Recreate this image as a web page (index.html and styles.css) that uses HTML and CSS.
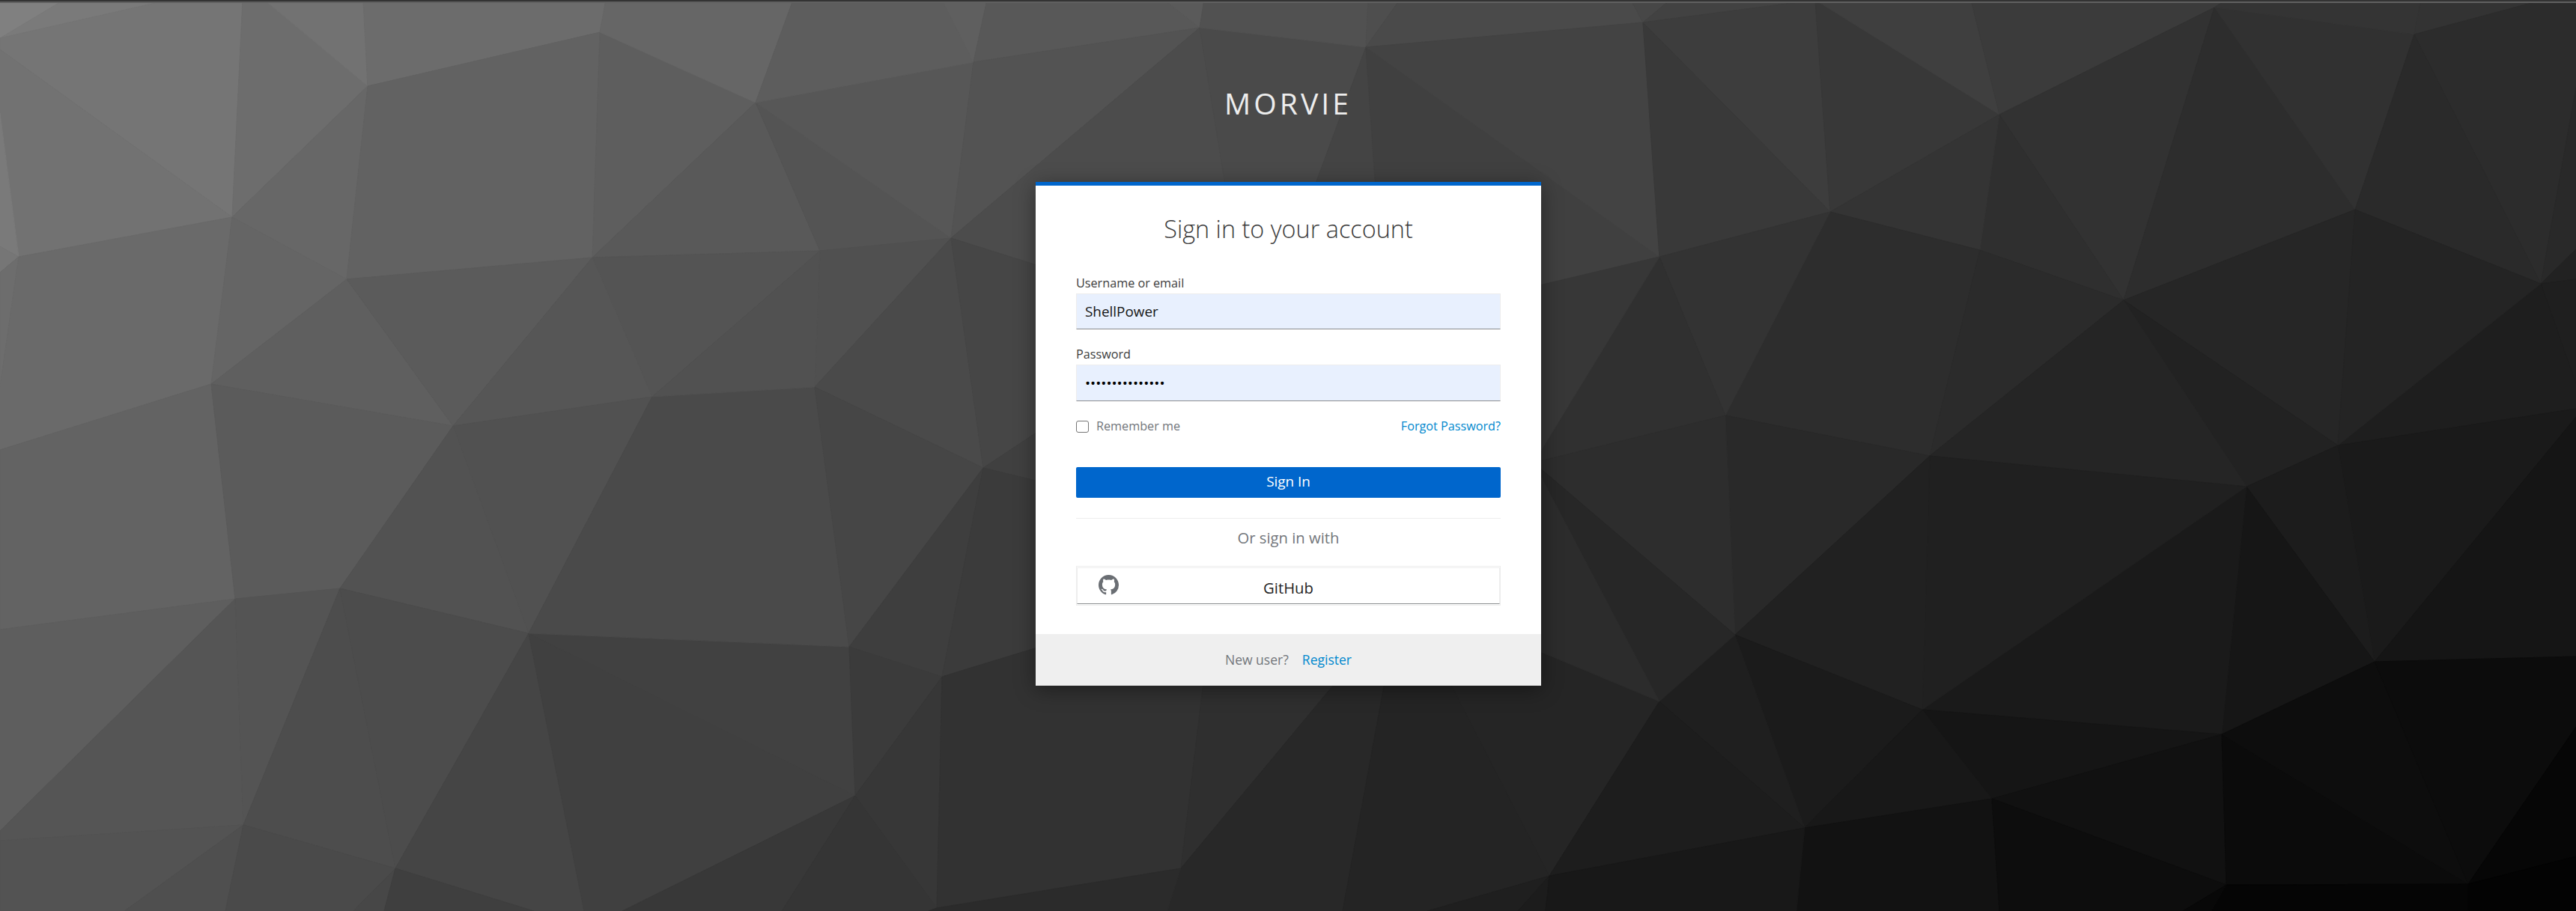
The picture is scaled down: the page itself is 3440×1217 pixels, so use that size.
FILE: index.html
```
<!DOCTYPE html>
<html lang="en">
<head>
<meta charset="utf-8">
<title>Sign in to Morvie</title>
<link rel="stylesheet" href="styles.css">
</head>
<body>
<svg class="backdrop" viewBox="0 0 3440 1217" preserveAspectRatio="none" aria-hidden="true">
  <!-- upper left -->
  <polygon color="#808080" points="0,51 0,0 85,0"/>
  <polygon color="#7a7a7a" points="0,51 85,0 225,0"/>
  <polygon color="#757575" points="0,51 225,0 324,0 310,290 0,66"/>
  <polygon color="#727272" points="0,66 310,290 25,343 0,151"/>
  <polygon color="#7a7a7a" points="0,151 25,343 0,329"/>
  <polygon color="#767676" points="0,329 25,343 0,364"/>
  <polygon color="#6d6d6d" points="0,364 25,343 0,517"/>
  <polygon color="#6d6d6d" points="324,0 353,0 491,115 310,290"/>
  <polygon color="#727272" points="353,0 485,0 491,115"/>
  <polygon color="#6c6c6c" points="485,0 809,0 801,43 491,115"/>
  <polygon color="#676767" points="491,115 463,373 310,290"/>
  <polygon color="#626262" points="491,115 801,43 791,344 463,373"/>
  <polygon color="#6a6a6a" points="25,343 310,290 282,513 0,601 0,517"/>
  <polygon color="#656565" points="310,290 463,373 282,513"/>
  <polygon color="#5f5f5f" points="463,373 605,569 282,513"/>
  <polygon color="#5b5b5b" points="463,373 791,344 605,569"/>
  <polygon color="#5e5e5e" points="801,43 1009,137 791,344"/>
  <polygon color="#666666" points="801,43 809,0 1059,0 1009,137"/>
  <polygon color="#595959" points="791,344 1009,137 1095,335"/>
  <polygon color="#545454" points="791,344 1095,335 871,530"/>
  <polygon color="#565656" points="791,344 871,530 605,569"/>
  <!-- lower left -->
  <polygon color="#636363" points="282,513 314,800 0,841 0,601"/>
  <polygon color="#5b5b5b" points="282,513 605,569 454,786 314,800"/>
  <polygon color="#515151" points="605,569 871,530 706,846"/>
  <polygon color="#525252" points="605,569 706,846 454,786"/>
  <polygon color="#5e5e5e" points="314,800 0,841 0,1110"/>
  <polygon color="#555555" points="314,800 325,1102 0,1123 0,1110"/>
  <polygon color="#545454" points="314,800 454,786 325,1102"/>
  <polygon color="#4d4d4d" points="454,786 528,1160 325,1102"/>
  <polygon color="#4c4c4c" points="454,786 706,846 528,1160"/>
  <polygon color="#454545" points="706,846 528,1160 713,1217 780,1217"/>
  <polygon color="#404040" points="706,846 780,1217 831,1217 1142,1063"/>
  <polygon color="#414141" points="706,846 1142,1063 1134,864"/>
  <polygon color="#4a4a4a" points="871,530 1088,517 1134,864 706,846"/>
  <polygon color="#535353" points="325,1102 0,1123 0,1217 166,1217"/>
  <polygon color="#4f4f4f" points="325,1102 166,1217 301,1217"/>
  <polygon color="#4a4a4a" points="325,1102 301,1217 472,1217 528,1160"/>
  <polygon color="#474747" points="528,1160 472,1217 513,1217"/>
  <polygon color="#3f3f3f" points="528,1160 513,1217 713,1217"/>
  <!-- upper centre -->
  <polygon color="#545454" points="1009,137 1095,335 1270,318"/>
  <polygon color="#575757" points="1009,137 1300,83 1270,318"/>
  <polygon color="#5d5d5d" points="1009,137 1059,0 1258,0 1300,83"/>
  <polygon color="#5f5f5f" points="1300,83 1258,0 1318,0"/>
  <polygon color="#585858" points="1300,83 1318,0 1555,0 1602,37"/>
  <polygon color="#5a5a5a" points="1602,37 1555,0 1608,0"/>
  <polygon color="#535353" points="1300,83 1602,37 1270,318"/>
  <polygon color="#505050" points="1095,335 1270,318 1088,517"/>
  <polygon color="#515151" points="1095,335 1088,517 871,530"/>
  <polygon color="#4a4a4a" points="1270,318 1088,517 1313,625"/>
  <polygon color="#464646" points="1088,517 1134,864 1313,625"/>
  <polygon color="#4c4c4c" points="1602,37 1270,318 1381,353 1500,400 1661,400"/>
  <polygon color="#464646" points="1270,318 1381,353 1500,400 1500,501 1313,625"/>
  <polygon color="#4a4a4a" points="1602,37 1824,63 1700,400 1661,400"/>
  <polygon color="#515151" points="1602,37 1608,0 1827,0 1824,63"/>
  <polygon color="#4e4e4e" points="1824,63 1827,0 1869,0"/>
  <polygon color="#4a4a4a" points="1824,63 1869,0 2178,0 2194,30"/>
  <polygon color="#444444" points="1824,63 1700,400 1847,400"/>
  <polygon color="#404040" points="1824,63 1847,400 2058,380 2216,343"/>
  <polygon color="#434343" points="1824,63 2194,30 2216,343"/>
  <!-- lower centre -->
  <polygon color="#404040" points="1313,625 1500,501 1500,670"/>
  <polygon color="#3e3e3e" points="1134,864 1313,625 1258,904"/>
  <polygon color="#3b3b3b" points="1313,625 1500,670 1500,830 1258,904"/>
  <polygon color="#3b3b3b" points="1134,864 1258,904 1142,1063"/>
  <polygon color="#373737" points="1258,904 1251,1213 1142,1063"/>
  <polygon color="#383838" points="1142,1063 831,1217 1044,1217"/>
  <polygon color="#353535" points="1142,1063 1044,1217 1240,1217 1251,1213"/>
  <polygon color="#323232" points="1258,904 1500,830 1617,830 1577,1160 1251,1213"/>
  <polygon color="#2f2f2f" points="1617,830 1577,1160 1780,916 1850,830"/>
  <polygon color="#282828" points="1577,1160 1780,916 1850,830 1864,830 1793,1217 1559,1217"/>
  <polygon color="#2b2b2b" points="1251,1213 1577,1160 1559,1217 1240,1217"/>
  <polygon color="#242424" points="1864,830 1910,860 2069,1170 1906,1217 1793,1217"/>
  <polygon color="#252525" points="1910,860 1950,826 2216,937 2069,1170"/>
  <polygon color="#1f1f1f" points="2069,1170 1906,1217 2027,1217"/>
  <polygon color="#1c1c1c" points="2069,1170 2027,1217 2064,1217"/>
  <!-- upper right -->
  <polygon color="#474747" points="2194,30 2178,0 2230,0"/>
  <polygon color="#424242" points="2194,30 2230,0 2424,0"/>
  <polygon color="#3d3d3d" points="2194,30 2424,0 2444,283"/>
  <polygon color="#393939" points="2194,30 2444,283 2216,343"/>
  <polygon color="#383838" points="2424,0 2444,283 2670,153"/>
  <polygon color="#3f3f3f" points="2424,0 2632,0 2670,153"/>
  <polygon color="#3b3b3b" points="2670,153 2632,0 2972,0 2957,10"/>
  <polygon color="#323232" points="2670,153 2957,10 2836,401"/>
  <polygon color="#2f2f2f" points="2670,153 2836,401 2644,334"/>
  <polygon color="#343434" points="2670,153 2644,334 2444,283"/>
  <polygon color="#2d2d2d" points="2444,283 2644,334 2577,609 2304,555"/>
  <polygon color="#333333" points="2216,343 2444,283 2304,555"/>
  <polygon color="#303030" points="2216,343 2304,555 2048,618"/>
  <polygon color="#373737" points="2216,343 2048,618 2040,385"/>
  <polygon color="#2b2b2b" points="2644,334 2836,401 2577,609"/>
  <polygon color="#2d2d2d" points="2957,10 3145,280 2836,401"/>
  <polygon color="#313131" points="2957,10 3224,46 3145,280"/>
  <polygon color="#343434" points="2957,10 2972,0 3233,0 3224,46"/>
  <polygon color="#333333" points="3224,46 3233,0 3395,0"/>
  <polygon color="#2c2c2c" points="3224,46 3395,0 3440,0 3440,117 3393,379"/>
  <polygon color="#2a2a2a" points="3224,46 3393,379 3145,280"/>
  <polygon color="#292929" points="3393,379 3440,117 3440,333"/>
  <polygon color="#222222" points="3393,379 3440,333 3440,373"/>
  <polygon color="#1f1f1f" points="3393,379 3440,373 3440,513"/>
  <polygon color="#1e1e1e" points="3393,379 3440,513 3440,546 3122,595"/>
  <polygon color="#262626" points="2836,401 3145,280 3122,595"/>
  <polygon color="#242424" points="3145,280 3393,379 3122,595"/>
  <polygon color="#222222" points="2836,401 3122,595 3000,650"/>
  <polygon color="#252525" points="2836,401 3000,650 2577,609"/>
  <!-- lower right -->
  <polygon color="#1a1a1a" points="3122,595 3440,546 3440,557 3171,884"/>
  <polygon color="#151515" points="3171,884 3440,557 3440,877"/>
  <polygon color="#1c1c1c" points="3000,650 3122,595 3171,884"/>
  <polygon color="#161616" points="3000,650 3171,884 2967,981"/>
  <polygon color="#1a1a1a" points="3000,650 2967,981 2567,948"/>
  <polygon color="#202020" points="2577,609 3000,650 2567,948"/>
  <polygon color="#292929" points="2304,555 2577,609 2317,848"/>
  <polygon color="#2d2d2d" points="2304,555 2317,848 2048,618"/>
  <polygon color="#212121" points="2577,609 2567,948 2317,848"/>
  <polygon color="#1b1b1b" points="2317,848 2567,948 2410,1106"/>
  <polygon color="#1f1f1f" points="2317,848 2410,1106 2216,937"/>
  <polygon color="#1d1d1d" points="2216,937 2410,1106 2069,1170"/>
  <polygon color="#272727" points="2048,618 2317,848 2216,937"/>
  <polygon color="#2c2c2c" points="2048,618 2216,937 1950,826"/>
  <polygon color="#151515" points="2567,948 2967,981 2660,1067"/>
  <polygon color="#181818" points="2567,948 2660,1067 2410,1106"/>
  <polygon color="#121212" points="2410,1106 2660,1067 2670,1217 2399,1217"/>
  <polygon color="#181818" points="2069,1170 2410,1106 2399,1217 2064,1217"/>
  <polygon color="#111111" points="2660,1067 2967,981 2973,1182"/>
  <polygon color="#0d0d0d" points="2660,1067 2973,1182 2915,1217 2670,1217"/>
  <polygon color="#0b0b0b" points="2967,981 2973,1182 3296,1181"/>
  <polygon color="#0d0d0d" points="2967,981 3171,884 3296,1181"/>
  <polygon color="#0c0c0c" points="3171,884 3440,877 3440,971 3296,1181"/>
  <polygon color="#060606" points="3296,1181 3440,971 3440,1144"/>
  <polygon color="#030303" points="3296,1181 3440,1144 3440,1217 3296,1217"/>
  <polygon color="#050505" points="2973,1182 3296,1181 3296,1217 2953,1217"/>
  <polygon color="#080808" points="2973,1182 2953,1217 2915,1217"/>
</svg>
<div class="page">
  <div class="top-strip"></div>
  <header class="brand">MORVIE</header>
  <main class="card">
    <form class="card-body">
      <h1 class="heading">Sign in to your account</h1>
      <label class="label label-user">Username or email</label>
      <div class="field">ShellPower</div>
      <label class="label label-pass">Password</label>
      <div class="field field-pass">•••••••••••••••</div>
      <div class="options">
        <label class="remember"><span class="checkbox"></span>Remember me</label>
        <a class="link">Forgot Password?</a>
      </div>
      <button class="submit" type="button">Sign In</button>
      <hr class="rule">
      <h2 class="alt">Or sign in with</h2>
      <a class="provider">
        <span class="provider-inner">
          <svg class="provider-icon" viewBox="0 0 16 16" aria-hidden="true"><path d="M8 0C3.58 0 0 3.58 0 8c0 3.54 2.29 6.53 5.47 7.59.4.07.55-.17.55-.38 0-.19-.01-.82-.01-1.49-2.01.37-2.53-.49-2.69-.94-.09-.23-.48-.94-.82-1.13-.28-.15-.68-.52-.01-.53.63-.01 1.08.58 1.23.82.72 1.21 1.87.87 2.33.66.07-.52.28-.87.51-1.07-1.78-.2-3.64-.89-3.64-3.95 0-.87.31-1.59.82-2.15-.08-.2-.36-1.02.08-2.12 0 0 .67-.21 2.2.82.64-.18 1.32-.27 2-.27s1.36.09 2 .27c1.53-1.04 2.2-.82 2.2-.82.44 1.1.16 1.92.08 2.12.51.56.82 1.27.82 2.15 0 3.07-1.87 3.75-3.65 3.95.29.25.54.73.54 1.48 0 1.07-.01 1.93-.01 2.2 0 .21.15.46.55.38A8.01 8.01 0 0 0 16 8c0-4.42-3.58-8-8-8z"/></svg>
          <span class="provider-name">GitHub</span>
        </span>
      </a>
    </form>
    <footer class="card-footer">
      <span>New user?</span>
      <a class="link">Register</a>
    </footer>
  </main>
</div>
</body>
</html>
```
FILE: styles.css
```
* { box-sizing: border-box; }

html, body { height: 100%; margin: 0; }

body {
  overflow: hidden;
  background: #2b2b2b;
  color: #3c3c3c;
  font-family: "Open Sans", "Noto Sans", sans-serif;
}

/* faceted wallpaper behind the whole page */
.backdrop {
  position: absolute;
  inset: 0;
  z-index: -1;
  width: 100%;
  height: 100%;
}

.backdrop polygon {
  fill: currentColor;
  stroke: currentColor;
  stroke-width: 1;
  stroke-linejoin: round;
}

.page {
  display: flex;
  flex-direction: column;
  align-items: center;
  height: 100%;
}

/* two-tone strip along the top edge */
.top-strip {
  align-self: stretch;
  flex: none;
  height: 4px;
  border-top: 2px solid #333;
  background: #606060;
}

.brand {
  height: 239px;
  flex: none;
  padding-top: 104px;
  color: #ededed;
  font-size: 39.15px;
  line-height: 60px;
  letter-spacing: 4.05px;
}

.card {
  width: 675px;
  margin-left: 1px;
  border-top: 5px solid #06c;
  background: #fff;
  box-shadow: 0 5px 26px rgba(0, 0, 0, 0.4);
}

.card-body {
  display: flex;
  flex-direction: column;
  height: 599px;
  padding: 36px 54px 0;
}

.heading {
  margin: 0 0 40px;
  font-size: 32.4px;
  font-weight: 300;
  line-height: 42px;
  text-align: center;
}

.label {
  margin-bottom: 2px;
  font-size: 16.2px;
  line-height: 24px;
}

.label-pass { margin-top: 21px; }

.field {
  height: 48px;
  padding-left: 11px;
  border: 1px solid #ededed;
  border-bottom-color: #8b8d8f;
  background: #e8f0fe;
  color: #151515;
  font-size: 18.9px;
  line-height: 46px;
}

.field-pass {
  height: 49px;
  color: #000;
  line-height: 49px;
}

.options {
  display: flex;
  justify-content: space-between;
  margin-top: 21px;
  font-size: 16.2px;
  line-height: 24px;
}

.remember {
  display: flex;
  align-items: center;
  gap: 10px;
  color: #72767b;
}

.checkbox {
  width: 17px;
  height: 16px;
  margin-top: 2px;
  border: 1px solid #767676;
  border-radius: 3px;
  background: #fff;
}

.link { color: #0088ce; }

.submit {
  height: 41px;
  margin-top: 43px;
  padding: 0 0 2px;
  border: 0;
  border-radius: 2px;
  background: #06c;
  color: #fff;
  font: 500 18.9px/39px "Open Sans", "Noto Sans", sans-serif;
}

.rule {
  width: 100%;
  height: 1px;
  margin: 27px 0 11px;
  border: 0;
  background: #ededed;
}

.alt {
  margin: 0 0 24px;
  color: #72767b;
  font-size: 20.25px;
  font-weight: 400;
  line-height: 28px;
  text-align: center;
}

.provider {
  height: 53px;
  padding: 1px 0;
  border: 1px solid #ededed;
  color: #252525;
  font-size: 20.25px;
}

.provider-inner {
  display: grid;
  grid-template-columns: 27px 1fr 27px;
  height: 49px;
  padding: 0 28px;
  border: 1px solid #ededed;
  border-bottom-color: #8b8d8f;
}

.provider-icon {
  width: 27px;
  height: 27px;
  margin-top: 9px;
  fill: #6a6e73;
}

.provider-name {
  line-height: 52px;
  text-align: center;
}

.card-footer {
  display: flex;
  justify-content: center;
  gap: 18px;
  height: 69px;
  background: #efefef;
  color: #72767b;
  font-size: 17.55px;
  line-height: 68px;
}
```
